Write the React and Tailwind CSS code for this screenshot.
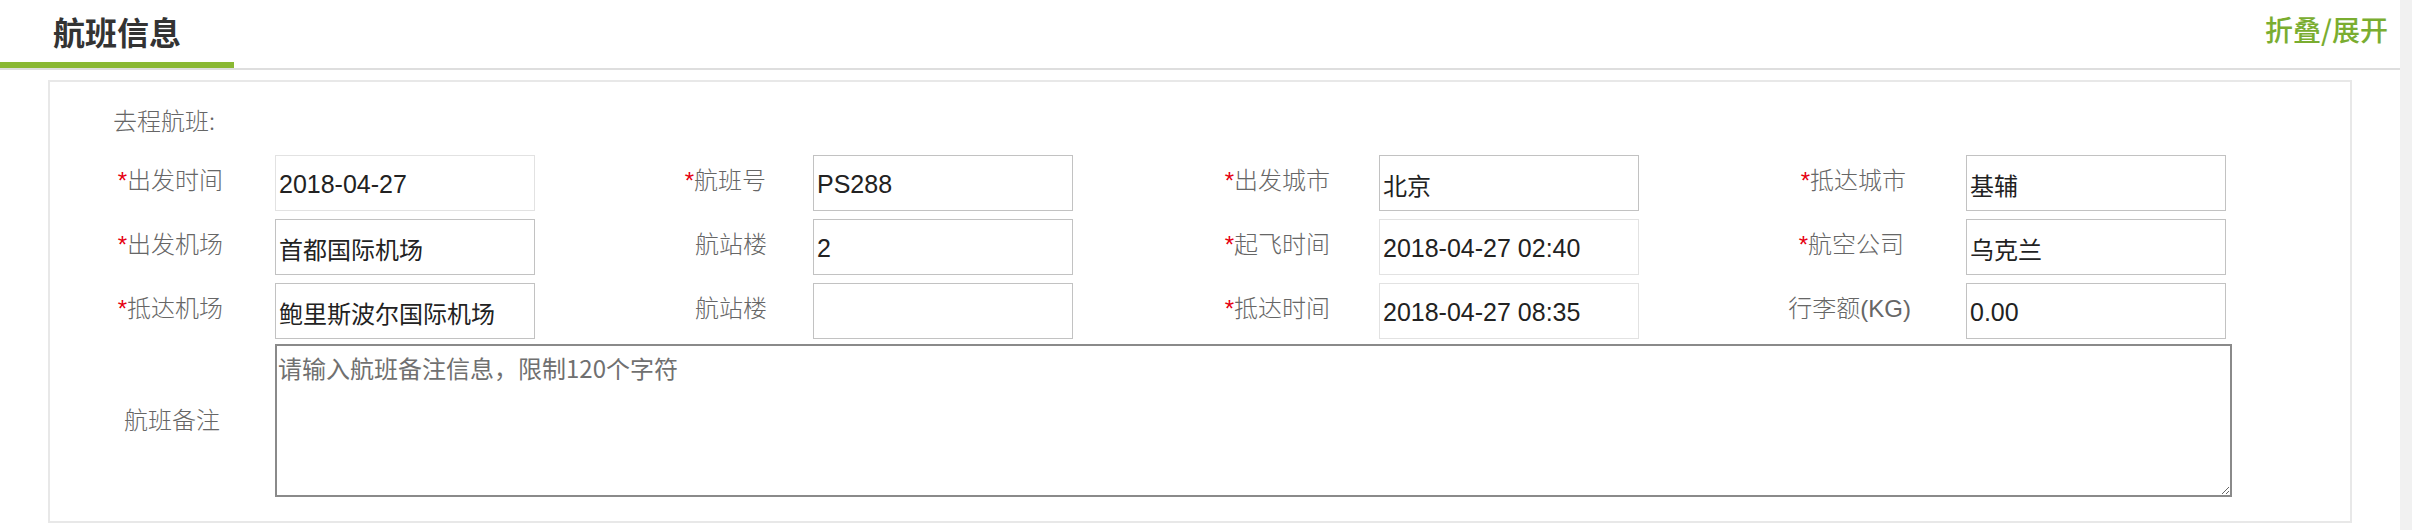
import React from "react";

const Label = ({ star, text, pr }) => (
  <div className={`flex h-[56px] items-center justify-end pb-[5px] ${pr}`}>
    <span className="whitespace-nowrap text-[24px] font-light leading-none text-[#666]">
      {star && <span className="text-[#e60012]">*</span>}
      {text}
    </span>
  </div>
);

const Field = ({ value, date, cjk }) => (
  <input
    readOnly
    value={value}
    className={`box-border h-[56px] w-[260px] border bg-white pl-[3px] pt-[2px] text-[#222] outline-none ${
      cjk ? "text-[24px] font-normal" : "text-[25px]"
    } ${date ? "border-[#e2e2e2]" : "border-[#c2c2c2]"}`}
  />
);

export default function App() {
  return (
    <div className="flex h-[530px] w-[2412px] bg-white font-['Liberation_Sans','Noto_Sans_CJK_SC',sans-serif]">
      <div className="flex w-[2400px] flex-col">
        {/* header */}
        <div className="flex h-[70px] items-start justify-between border-b-2 border-[#dedede]">
          <div className="flex h-[68px] w-[234px] items-center justify-center border-b-[6px] border-[#8ab833]">
            <span className="font-['Noto_Sans_CJK_SC',sans-serif] text-[32px] font-bold leading-none text-[#333]">
              航班信息
            </span>
          </div>
          <div className="flex h-[58px] items-center pr-[12px]">
            <span className="font-['Noto_Sans_CJK_SC',sans-serif] text-[28px] font-medium leading-none text-[#7aad30]">
              折叠/展开
            </span>
          </div>
        </div>

        {/* panel */}
        <div className="mx-[48px] mt-[10px] flex h-[443px] flex-col border-2 border-[#e8e8e8] pb-[24px] pt-[20px]">
          <div className="flex h-[36px] items-center pl-[63px] font-['Noto_Sans_CJK_SC',sans-serif] text-[24px] font-light text-[#666]">
            去程航班:
          </div>

          <div className="mt-[17px] grid grid-cols-[225px_260px_278px_260px_306px_260px_327px_260px] gap-y-2">
            <Label star text="出发时间" pr="pr-[52px]" />
            <Field value="2018-04-27" date />
            <Label star text="航班号" pr="pr-[47px]" />
            <Field value="PS288" />
            <Label star text="出发城市" pr="pr-[49px]" />
            <Field value="北京" cjk />
            <Label star text="抵达城市" pr="pr-[60px]" />
            <Field value="基辅" cjk />

            <Label star text="出发机场" pr="pr-[52px]" />
            <Field value="首都国际机场" cjk />
            <Label text="航站楼" pr="pr-[46px]" />
            <Field value="2" />
            <Label star text="起飞时间" pr="pr-[49px]" />
            <Field value="2018-04-27 02:40" date />
            <Label star text="航空公司" pr="pr-[62px]" />
            <Field value="乌克兰" cjk />

            <Label star text="抵达机场" pr="pr-[52px]" />
            <Field value="鲍里斯波尔国际机场" cjk />
            <Label text="航站楼" pr="pr-[46px]" />
            <Field value="" />
            <Label star text="抵达时间" pr="pr-[49px]" />
            <Field value="2018-04-27 08:35" date />
            <Label text="行李额(KG)" pr="pr-[55px]" />
            <Field value="0.00" />
          </div>

          <div className="mt-[5px] flex h-[153px]">
            <div className="flex w-[225px] items-center justify-end pr-[55px]">
              <span className="text-[24px] font-light leading-none text-[#666]">航班备注</span>
            </div>
            <textarea
              placeholder="请输入航班备注信息，限制120个字符"
              className="box-border h-[153px] w-[1957px] border-2 border-[#8a8a8a] bg-white pl-[1px] pt-[4px] font-['Noto_Sans_CJK_SC',sans-serif] text-[24px] leading-[36px] text-[#333] outline-none placeholder:text-[#707070]"
            />
          </div>
        </div>
      </div>
      <div className="h-[530px] w-[12px] bg-[#f1f1f1]" />
    </div>
  );
}
